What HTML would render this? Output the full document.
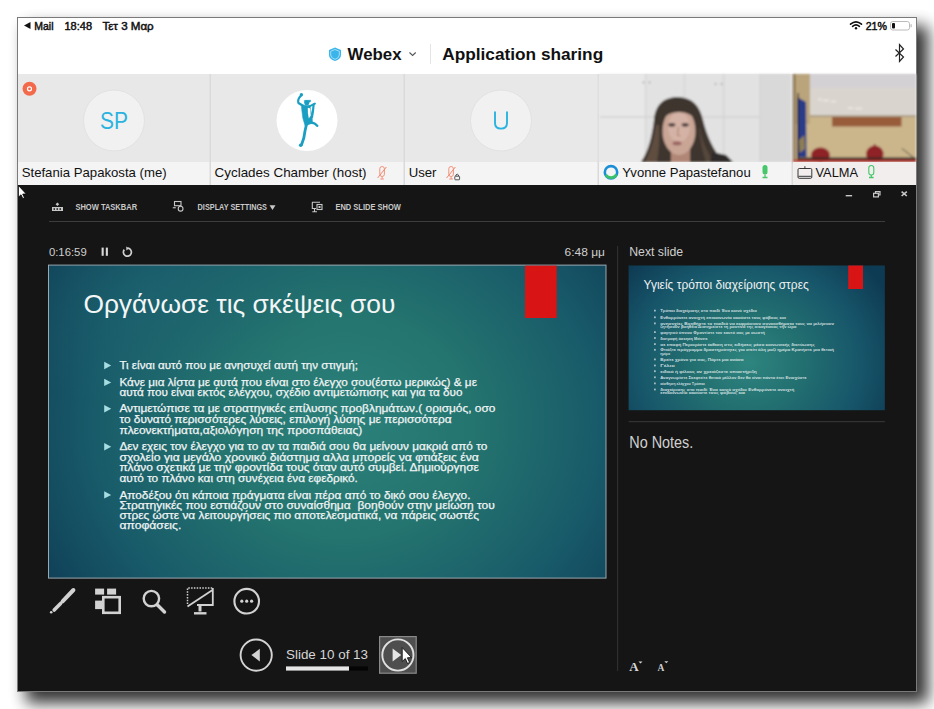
<!DOCTYPE html><html><head><meta charset="utf-8"><style>html,body{margin:0;padding:0;background:#fff}body{width:934px;height:709px;overflow:hidden}svg{display:block}text{font-family:"Liberation Sans",sans-serif;white-space:pre}</style></head><body>
<svg width="934" height="709" viewBox="0 0 934 709">
<defs>
<filter id="vb" x="-5%" y="-5%" width="110%" height="110%"><feGaussianBlur stdDeviation="0.9"/></filter>
<filter id="sh" x="-10%" y="-10%" width="120%" height="120%"><feGaussianBlur stdDeviation="8"/></filter>
<radialGradient id="sg1" gradientUnits="userSpaceOnUse" cx="0" cy="0" r="1" gradientTransform="translate(345 425) scale(365 320)">
  <stop offset="0" stop-color="#2c817b"/>
  <stop offset="0.35" stop-color="#24746f"/>
  <stop offset="0.7" stop-color="#185a69"/>
  <stop offset="1" stop-color="#0e3b54"/>
</radialGradient>
<radialGradient id="sg2" gradientUnits="userSpaceOnUse" cx="0" cy="0" r="1" gradientTransform="translate(150 300) scale(170 110)">
  <stop offset="0" stop-color="#1e6570" stop-opacity="0.55"/>
  <stop offset="1" stop-color="#1e6570" stop-opacity="0"/>
</radialGradient>
<radialGradient id="tg1" gradientUnits="userSpaceOnUse" cx="0" cy="0" r="1" gradientTransform="translate(748 362) scale(160 140)">
  <stop offset="0" stop-color="#2e857f"/>
  <stop offset="0.35" stop-color="#226f70"/>
  <stop offset="0.7" stop-color="#17566a"/>
  <stop offset="1" stop-color="#0e3b54"/>
</radialGradient>
</defs>
<rect width="934" height="709" fill="#fff"/>
<rect x="26" y="26" width="902" height="677" fill="#000" opacity="0.8" filter="url(#sh)"/>
<rect x="17" y="17" width="900" height="675" fill="#7a7a7a"/>
<rect x="18" y="18" width="898" height="673" fill="#fff"/>
<path d="M24 25.5 L30.5 22 L30.5 29 Z" fill="#111"/>
<text x="34.3" y="29.5" font-size="10.3" font-weight="normal" fill="#111" textLength="19.2" lengthAdjust="spacingAndGlyphs" stroke="#111" stroke-width="0.45">Mail</text>
<text x="64.5" y="29.5" font-size="10.3" font-weight="normal" fill="#111" textLength="27.5" lengthAdjust="spacingAndGlyphs" stroke="#111" stroke-width="0.45">18:48</text>
<text x="102.4" y="29.5" font-size="10.3" font-weight="normal" fill="#111" textLength="51.3" lengthAdjust="spacingAndGlyphs" stroke="#111" stroke-width="0.45">Τετ 3 Μαρ</text>
<text x="865.7" y="29.5" font-size="10.3" font-weight="normal" fill="#111" textLength="21.3" lengthAdjust="spacingAndGlyphs" stroke="#111" stroke-width="0.45">21%</text>
<g fill="none" stroke="#111" stroke-width="1.6" stroke-linecap="round"><path d="M850.5 24.2 Q856 19.5 861.5 24.2"/><path d="M852.6 26.3 Q856 23.4 859.4 26.3"/></g><circle cx="856" cy="28.3" r="1.2" fill="#111"/>
<rect x="890.5" y="21.5" width="19" height="8.5" rx="2.2" fill="none" stroke="#bbb" stroke-width="1"/><rect x="892" y="23" width="3" height="5.5" rx="1" fill="#111"/><rect x="910.5" y="24.2" width="1.2" height="3" fill="#bbb"/>
<path d="M335 47.5 L341 50 L341 55 Q341 59 335 61 Q329 59 329 55 L329 50 Z" fill="#3ab4ea"/><path d="M335 49.5 L339.3 51.3 L339.3 55 Q339.3 58 335 59.4 Q330.7 58 330.7 55 L330.7 51.3 Z" fill="none" stroke="#9fe0f5" stroke-width="1"/>
<text x="347.6" y="60" font-size="16.5" font-weight="bold" fill="#111" textLength="54" lengthAdjust="spacingAndGlyphs" >Webex</text>
<path d="M409.5 52.5 L412.6 55.5 L415.7 52.5" fill="none" stroke="#555" stroke-width="1.1"/>
<rect x="430" y="44" width="1" height="20" fill="#e4e4e4"/>
<text x="442.2" y="60.3" font-size="16.5" font-weight="bold" fill="#111" textLength="161" lengthAdjust="spacingAndGlyphs" >Application sharing</text>
<path d="M895.5 49.5 L903.5 57 L899.5 61.5 L899.5 44.5 L903.5 49 L895.5 56.5" fill="none" stroke="#222" stroke-width="1.2" stroke-linejoin="miter"/>
<rect x="18" y="74" width="898" height="88" fill="#e8e8e8"/>
<rect x="18" y="162" width="898" height="23" fill="#f4f4f4"/>
<rect x="209.5" y="74" width="1.5" height="111" fill="#dadada"/>
<rect x="403.5" y="74" width="1.5" height="111" fill="#dadada"/>
<rect x="597.5" y="74" width="1.5" height="111" fill="#dadada"/>
<rect x="791.5" y="74" width="1.5" height="111" fill="#dadada"/>
<circle cx="114" cy="120.5" r="30.5" fill="#f1f1f1" stroke="#e2e2e2" stroke-width="1"/>
<text x="100" y="128.8" font-size="23" font-weight="normal" fill="#2bb3e0" textLength="28" lengthAdjust="spacingAndGlyphs" >SP</text>
<circle cx="307" cy="120.5" r="30.5" fill="#ffffff"/>
<circle cx="501" cy="120.5" r="30.5" fill="#f1f1f1" stroke="#e2e2e2" stroke-width="1"/>
<path d="M495 111.5 V123 Q495 128.6 501 128.6 Q507 128.6 507 123 V111.5" fill="none" stroke="#2bb3e0" stroke-width="1.9"/>
<circle cx="29.5" cy="88.8" r="7" fill="#f26a4b"/><circle cx="29.5" cy="88.8" r="2" fill="none" stroke="#fff" stroke-width="1.2"/>
<text x="21.7" y="177" font-size="13" font-weight="normal" fill="#111" textLength="145" lengthAdjust="spacingAndGlyphs" >Stefania Papakosta (me)</text>
<text x="214.6" y="177" font-size="13" font-weight="normal" fill="#111" textLength="152" lengthAdjust="spacingAndGlyphs" >Cyclades Chamber (host)</text>
<text x="408.7" y="177" font-size="13" font-weight="normal" fill="#111" textLength="27.8" lengthAdjust="spacingAndGlyphs" >User</text>
<g fill="#1a9ec2" stroke="#1a9ec2" stroke-linecap="round" stroke-linejoin="round">
<circle cx="301.4" cy="94.7" r="1.7" stroke="none"/>
<path d="M301 95.5 Q297.2 99.5 298.4 103 L303.5 106" fill="none" stroke-width="2.2"/>
<circle cx="306.8" cy="102.8" r="2.5" stroke="none"/>
<path d="M304.6 100.4 L310.6 100.3 L310.2 102 L305 102.5 Z" stroke-width="0.6"/>
<path d="M301.6 105.2 L309.8 105.4 L311.2 112 L312.2 118 L312.4 123 L305.2 126 L302.8 118 L301.8 110 Z" stroke-width="0.6"/>
<path d="M309 106.6 L314.9 103.6" fill="none" stroke-width="2"/>
<path d="M313.6 104.6 L313 111 L312 117" fill="none" stroke-width="2.2"/>
<path d="M311 122.6 Q315 122.8 317.3 125.9" fill="none" stroke-width="2.3"/>
<path d="M306.8 123 L305 131 L303.8 138 L301.6 144.6" fill="none" stroke-width="2.8"/>
<circle cx="300.7" cy="145.2" r="1.8" stroke="none"/>
</g>
<path d="M307.8 107.8 L310.4 108.6 L310.7 115.8 L308.8 118.6 L307.9 113 Z" fill="#ffffff"/>
<g fill="none" stroke="#f2876c" stroke-width="0.9"><rect x="379.8" y="166.5" width="4.6" height="10" rx="2.3"/><path d="M382.1 176.5 V178.8 M380.3 179.0 H383.9"/><path d="M377.6 178.0 L386.4 167.0" stroke-width="1"/></g>
<g fill="none" stroke="#f2876c" stroke-width="0.9"><rect x="448.8" y="166.5" width="4.6" height="10" rx="2.3"/><path d="M451.1 176.5 V178.8 M449.3 179.0 H452.9"/><path d="M446.6 178.0 L455.4 167.0" stroke-width="1"/></g>
<g fill="none" stroke="#444" stroke-width="0.9"><rect x="454.8" y="176.2" width="4.8" height="3.6" rx="0.6"/><path d="M455.9 176.2 V175 Q457.2 173.2 458.5 175 V176.2"/></g>
<g filter="url(#vb)">
<rect x="599" y="74" width="192" height="88" fill="#e2e2e2"/>
<rect x="599" y="74" width="46" height="88" fill="#e8e8e8"/>
<rect x="760" y="74" width="31" height="88" fill="#d9d9d9"/>
<g fill="#d2d2d2"><rect x="600" y="116.3" width="160" height="1.5"/><rect x="645" y="74" width="1" height="88"/><rect x="684" y="74" width="1" height="42"/><rect x="723" y="74" width="1.2" height="88"/><rect x="759.5" y="74" width="1.2" height="88"/></g>
<g fill="#a0a0a0"><circle cx="643.5" cy="82.5" r="0.9"/><circle cx="649.5" cy="82.5" r="0.9"/><circle cx="715.5" cy="84" r="0.9"/><circle cx="721.5" cy="84" r="0.9"/></g>
<path d="M677.5 97 C663 97 655 106 654 120 C652 136 649 150 641 162 L724 162 C713 150 707 136 703 120 C700 106 692 97 677.5 97 Z" fill="#3e342e"/>
<path d="M656 125 C654 140 650 152 645 162 L657 162 C659 150 660 138 659 125 Z" fill="#5e4d40"/>
<path d="M700 128 C702 142 708 152 714 162 L706 162 C702 152 700 140 699 128 Z" fill="#55463a"/>
<path d="M712 152 L726 155 L733 162 L710 162 Z" fill="#2d2a2a"/>
<rect x="671" y="148" width="19" height="14" fill="#b08676"/>
<ellipse cx="679" cy="131" rx="16.5" ry="24" fill="#c9a595"/>
<ellipse cx="679" cy="127" rx="11" ry="15" fill="#d4b2a5"/>
<path d="M661.5 121 C662 98 696 98 696.5 121 C690 109 668 109 661.5 121 Z" fill="#3e342e"/>
<g fill="#4e3c3a"><ellipse cx="671.8" cy="124.8" rx="3.6" ry="1.9"/><ellipse cx="685.2" cy="124.8" rx="3.6" ry="1.9"/></g>
<path d="M678.5 127 L677.5 135 L680.5 136" fill="none" stroke="#b08676" stroke-width="1.2"/>
<ellipse cx="677" cy="143.3" rx="4.5" ry="2" fill="#9a6462"/>
</g>
<g filter="url(#vb)">
<rect x="793" y="74" width="123" height="88" fill="#cbb58b"/>
<rect x="793" y="74" width="17" height="50" fill="#baa47b"/>
<rect x="793" y="74" width="2.5" height="88" fill="#8c7552"/>
<rect x="810" y="74" width="106" height="42" fill="#d9d4cd"/>
<rect x="810" y="74" width="106" height="14" fill="#d4d1d4"/>
<g fill="#ebe8e3" opacity="0.9"><rect x="818" y="98.5" width="4" height="2"/><rect x="823" y="99.5" width="6" height="2"/><rect x="831" y="100.5" width="5" height="2"/><rect x="848" y="107" width="5" height="2"/><rect x="855" y="107.5" width="7" height="2"/></g>
<rect x="810" y="115.5" width="106" height="1" fill="#8a7e6c"/>
<rect x="832" y="117" width="69.5" height="9.5" fill="#985b3b"/>
<path d="M797 97 L806 102 L806.5 157 L797 157 Z" fill="#2a3b88"/><path d="M799 140 L804.5 135 L805 149 L799.5 153 Z" fill="#a89048" opacity="0.8"/><rect x="797.6" y="93" width="1.2" height="66" fill="#2e2a22"/>
<ellipse cx="820.5" cy="155" rx="9.5" ry="7.5" fill="#8f2428"/><ellipse cx="874.8" cy="154" rx="8.8" ry="8.3" fill="#8f2428"/><circle cx="874.8" cy="145.5" r="1.2" fill="#8f2428"/>
<rect x="797" y="157.5" width="119" height="2.3" fill="#2d2624"/><rect x="793" y="159.8" width="123" height="2.2" fill="#b4322a"/>
<path d="M902 148.5 L914 158" stroke="#2e2e2e" stroke-width="0.9"/>
</g>
<rect x="599" y="162" width="192" height="23" fill="#f4f4f4"/>
<rect x="793" y="162" width="123" height="23" fill="#f1eeed"/>
<text x="622.3" y="177" font-size="13" font-weight="normal" fill="#111" textLength="128.4" lengthAdjust="spacingAndGlyphs" >Yvonne Papastefanou</text>
<text x="815.5" y="177" font-size="13" font-weight="normal" fill="#111" textLength="42.5" lengthAdjust="spacingAndGlyphs" >VALMA</text>
<circle cx="611" cy="172.3" r="6.2" fill="none" stroke="#1a8fd8" stroke-width="2.6"/><path d="M606 175 A6.2 6.2 0 0 0 616.5 174.5" fill="none" stroke="#3cc06a" stroke-width="2.6"/>
<rect x="762.5" y="165" width="5" height="9.5" rx="2.5" fill="#45c76a"/><path d="M765 174.5 V177.5 M762.5 177.5 H767.5" stroke="#45c76a" stroke-width="1.3"/>
<rect x="868.8" y="165.5" width="5" height="9.5" rx="2.5" fill="none" stroke="#45c76a" stroke-width="1.1"/><path d="M871.3 175 V177.5 M869 177.5 H873.6" stroke="#45c76a" stroke-width="1.3"/>
<g fill="none" stroke="#222" stroke-width="0.9"><rect x="798" y="168.5" width="13.8" height="9.8" rx="1.2"/><path d="M798.5 176.3 H811.3"/><path d="M804.9 166.2 V168.5"/></g>
<rect x="18" y="185" width="898" height="506" fill="#151515"/>
<g fill="#c8c8c8"><path d="M57.4 202.4 L59.2 204.2 L57.4 206 L55.6 204.2 Z"/><rect x="52" y="207" width="11" height="4"/></g><g fill="#151515"><rect x="53.5" y="208.3" width="1.5" height="1.5"/><rect x="56.5" y="208.3" width="1.5" height="1.5"/><rect x="59.5" y="208.3" width="1.5" height="1.5"/></g>
<text x="75.4" y="210" font-size="9" font-weight="bold" fill="#c8c8c8" textLength="61.7" lengthAdjust="spacingAndGlyphs" >SHOW TASKBAR</text>
<g fill="none" stroke="#c8c8c8" stroke-width="1.1"><rect x="174.5" y="201.5" width="6.5" height="4.2"/><circle cx="180.6" cy="208.7" r="2.4"/></g><rect x="172.8" y="207.2" width="3" height="1.1" fill="#c8c8c8"/>
<text x="197.6" y="210" font-size="9" font-weight="bold" fill="#c8c8c8" textLength="69.4" lengthAdjust="spacingAndGlyphs" >DISPLAY SETTINGS</text>
<path d="M269.5 205.2 L275.5 205.2 L272.5 210 Z" fill="#c8c8c8"/>
<g fill="none" stroke="#c8c8c8" stroke-width="1.1"><path d="M312 202.2 H320 M312.3 202.2 V208.5 H316 M314.5 208.5 V211.5 M312.3 211.8 H317"/><rect x="317" y="204.5" width="5" height="5"/></g><rect x="318.5" y="206" width="2" height="2" fill="#c8c8c8"/>
<text x="335.4" y="210" font-size="9" font-weight="bold" fill="#c8c8c8" textLength="65.4" lengthAdjust="spacingAndGlyphs" >END SLIDE SHOW</text>
<g fill="#c8c8c8"><rect x="845.7" y="195" width="6.4" height="1.4"/></g><g fill="none" stroke="#c8c8c8" stroke-width="1.2"><rect x="873.6" y="193.3" width="4.8" height="3.6"/><path d="M875.5 193.3 V191.6 H880 V195 H878.4"/></g><path d="M901.6 191.6 L906.8 196 M906.8 191.6 L901.6 196" stroke="#c8c8c8" stroke-width="1.6"/>
<rect x="49" y="221" width="836" height="1" fill="#3c3c3c"/>
<text x="48.9" y="255.8" font-size="11.5" font-weight="normal" fill="#cfcfcf" textLength="37.8" lengthAdjust="spacingAndGlyphs" >0:16:59</text>
<g fill="#d8d8d8"><rect x="101.6" y="247.6" width="2.1" height="8.2"/><rect x="105.8" y="247.6" width="2.1" height="8.2"/></g>
<path d="M124.3 249.6 A4 4 0 1 0 128 248.2" fill="none" stroke="#d0d0d0" stroke-width="1.7"/><path d="M126.2 246.4 L129.2 248.3 L126.4 250.4 Z" fill="#d0d0d0"/>
<text x="564.6" y="255.8" font-size="11.5" font-weight="normal" fill="#cfcfcf" textLength="40.4" lengthAdjust="spacingAndGlyphs" >6:48 μμ</text>
<text x="629.2" y="255.8" font-size="12" font-weight="normal" fill="#cfcfcf" textLength="53.9" lengthAdjust="spacingAndGlyphs" >Next slide</text>
<rect x="617" y="246" width="1.2" height="425" fill="#2e2e2e"/>
<rect x="48" y="264.6" width="558.5" height="314" fill="#9aa8b0"/>
<rect x="49" y="265.6" width="556.5" height="312" fill="url(#sg1)"/><rect x="49" y="265.6" width="556.5" height="312" fill="url(#sg2)"/>
<rect x="525" y="265.6" width="31.7" height="52.4" fill="#d81414"/>
<text x="83.4" y="312.8" font-size="26.5" font-weight="normal" fill="#f4f6f6" textLength="312" lengthAdjust="spacingAndGlyphs" >Οργάνωσε τις σκέψεις σου</text>
<text x="119.4" y="369.1" font-size="11" font-weight="normal" fill="#f0f4f4" textLength="238.5" lengthAdjust="spacingAndGlyphs" stroke="#f0f4f4" stroke-width="0.25">Τι είναι αυτό που με ανησυχεί αυτή την στιγμή;</text>
<path d="M104.2 361.8 L111.2 365.5 L104.2 369.20000000000005 Z" fill="#a6dde3"/>
<text x="119.4" y="386.0" font-size="11" font-weight="normal" fill="#f0f4f4" textLength="357.5" lengthAdjust="spacingAndGlyphs" stroke="#f0f4f4" stroke-width="0.25">Κάνε μια λίστα με αυτά που είναι στο έλεγχο σου(έστω μερικώς) &amp; με</text>
<path d="M104.2 378.7 L111.2 382.4 L104.2 386.1 Z" fill="#a6dde3"/>
<text x="119.4" y="396.4" font-size="11" font-weight="normal" fill="#f0f4f4" textLength="343.0" lengthAdjust="spacingAndGlyphs" stroke="#f0f4f4" stroke-width="0.25">αυτά που είναι εκτός ελέγχου, σχέδιο αντιμετώπισης και για τα δυο</text>
<text x="119.4" y="412.3" font-size="11" font-weight="normal" fill="#f0f4f4" textLength="376.0" lengthAdjust="spacingAndGlyphs" stroke="#f0f4f4" stroke-width="0.25">Αντιμετώπισε τα με στρατηγικές επίλυσης προβλημάτων.( ορισμός, οσο</text>
<path d="M104.2 405.0 L111.2 408.7 L104.2 412.40000000000003 Z" fill="#a6dde3"/>
<text x="119.4" y="423.4" font-size="11" font-weight="normal" fill="#f0f4f4" textLength="332.3" lengthAdjust="spacingAndGlyphs" stroke="#f0f4f4" stroke-width="0.25">το δυνατό περισσότερες λύσεις, επιλογή λύσης με περισσότερα</text>
<text x="119.4" y="434.1" font-size="11" font-weight="normal" fill="#f0f4f4" textLength="242.8" lengthAdjust="spacingAndGlyphs" stroke="#f0f4f4" stroke-width="0.25">πλεονεκτήματα,αξιολόγηση της προσπάθειας)</text>
<text x="119.4" y="450.3" font-size="11" font-weight="normal" fill="#f0f4f4" textLength="367.9" lengthAdjust="spacingAndGlyphs" stroke="#f0f4f4" stroke-width="0.25">Δεν εχεις τον έλεγχο για το αν τα παιδιά σου θα μείνουν μακριά από το</text>
<path d="M104.2 443.0 L111.2 446.7 L104.2 450.40000000000003 Z" fill="#a6dde3"/>
<text x="119.4" y="460.6" font-size="11" font-weight="normal" fill="#f0f4f4" textLength="359.5" lengthAdjust="spacingAndGlyphs" stroke="#f0f4f4" stroke-width="0.25">σχολείο για μεγάλο χρονικό διάστημα αλλα μπορείς να φτιάξεις ένα</text>
<text x="119.4" y="470.8" font-size="11" font-weight="normal" fill="#f0f4f4" textLength="359.5" lengthAdjust="spacingAndGlyphs" stroke="#f0f4f4" stroke-width="0.25">πλάνο σχετικά με την φροντίδα τους όταν αυτό συμβεί. Δημιούργησε</text>
<text x="119.4" y="481.5" font-size="11" font-weight="normal" fill="#f0f4f4" textLength="238.5" lengthAdjust="spacingAndGlyphs" stroke="#f0f4f4" stroke-width="0.25">αυτό το πλάνο και στη συνέχεια ένα εφεδρικό.</text>
<text x="119.4" y="498.5" font-size="11" font-weight="normal" fill="#f0f4f4" textLength="351.1" lengthAdjust="spacingAndGlyphs" stroke="#f0f4f4" stroke-width="0.25">Αποδέξου ότι κάποια πράγματα είναι πέρα από το δικό σου έλεγχο.</text>
<path d="M104.2 491.2 L111.2 494.9 L104.2 498.6 Z" fill="#a6dde3"/>
<text x="119.4" y="508.5" font-size="11" font-weight="normal" fill="#f0f4f4" textLength="375.5" lengthAdjust="spacingAndGlyphs" stroke="#f0f4f4" stroke-width="0.25">Στρατηγικές που εστιάζουν στο συναίσθημα  βοηθούν στην μείωση του</text>
<text x="119.4" y="518.8" font-size="11" font-weight="normal" fill="#f0f4f4" textLength="359.5" lengthAdjust="spacingAndGlyphs" stroke="#f0f4f4" stroke-width="0.25">στρες ώστε να λειτουργήσεις πιο αποτελεσματικά, να πάρεις σωστές</text>
<text x="119.4" y="529.3" font-size="11" font-weight="normal" fill="#f0f4f4" textLength="61.9" lengthAdjust="spacingAndGlyphs" stroke="#f0f4f4" stroke-width="0.25">αποφάσεις.</text>
<rect x="628.6" y="265.5" width="256.2" height="144.7" fill="url(#tg1)"/>
<rect x="848.2" y="265.5" width="14.8" height="23.5" fill="#d81414"/>
<text x="643.5" y="289" font-size="13" font-weight="normal" fill="#eef2f2" textLength="165.3" lengthAdjust="spacingAndGlyphs" >Υγιείς τρόποι διαχείρισης στρες</text>
<text x="660.2" y="312.2" font-size="4.4" font-weight="bold" fill="#eef4f4" fill-opacity="0.85" textLength="96.6" lengthAdjust="spacingAndGlyphs">Τρόποι διαχείρισης στο παιδί Ένα κοινό σχέδιο</text>
<rect x="654" y="309.7" width="1.8" height="1.8" fill="#d8e6e8" opacity="0.7"/>
<text x="660.2" y="318.9" font-size="4.4" font-weight="bold" fill="#eef4f4" fill-opacity="0.85" textLength="125.7" lengthAdjust="spacingAndGlyphs">Ενθαρρύνετε ανοιχτή επικοινωνία ακούστε τους φόβους και</text>
<rect x="654" y="316.4" width="1.8" height="1.8" fill="#d8e6e8" opacity="0.7"/>
<text x="660.2" y="325.0" font-size="4.4" font-weight="bold" fill="#eef4f4" fill-opacity="0.85" textLength="173.9" lengthAdjust="spacingAndGlyphs">ανησυχίες Βοηθήστε τα παιδιά να εκφράσουν συναισθήματα τους να μιλήσουν</text>
<rect x="654" y="322.5" width="1.8" height="1.8" fill="#d8e6e8" opacity="0.7"/>
<text x="660.2" y="328.0" font-size="4.4" font-weight="bold" fill="#eef4f4" fill-opacity="0.85" textLength="136.3" lengthAdjust="spacingAndGlyphs">ζητήσουν βοήθεια Διατηρείστε τη ρουτίνα της οικογένειας την ώρα</text>
<text x="660.2" y="333.7" font-size="4.4" font-weight="bold" fill="#eef4f4" fill-opacity="0.85" textLength="104.7" lengthAdjust="spacingAndGlyphs">φαγητού ύπνου Φροντίστε τον εαυτό σας με σωστή</text>
<rect x="654" y="331.2" width="1.8" height="1.8" fill="#d8e6e8" opacity="0.7"/>
<text x="660.2" y="339.6" font-size="4.4" font-weight="bold" fill="#eef4f4" fill-opacity="0.85" textLength="47.4" lengthAdjust="spacingAndGlyphs">διατροφή άσκηση Μείνετε</text>
<rect x="654" y="337.1" width="1.8" height="1.8" fill="#d8e6e8" opacity="0.7"/>
<text x="660.2" y="345.7" font-size="4.4" font-weight="bold" fill="#eef4f4" fill-opacity="0.85" textLength="154.6" lengthAdjust="spacingAndGlyphs">σε επαφή Περιορίστε έκθεση στις ειδήσεις μέσα κοινωνικής δικτύωσης</text>
<rect x="654" y="343.2" width="1.8" height="1.8" fill="#d8e6e8" opacity="0.7"/>
<text x="660.2" y="351.4" font-size="4.4" font-weight="bold" fill="#eef4f4" fill-opacity="0.85" textLength="173.9" lengthAdjust="spacingAndGlyphs">Φτιάξτε πρόγραμμα δραστηριότητες για σπίτι όλη μαζί ημέρα Κρατήστε μια θετική</text>
<rect x="654" y="348.9" width="1.8" height="1.8" fill="#d8e6e8" opacity="0.7"/>
<text x="660.2" y="354.9" font-size="4.4" font-weight="bold" fill="#eef4f4" fill-opacity="0.85" textLength="9.8" lengthAdjust="spacingAndGlyphs">ημέρα</text>
<text x="660.2" y="361.0" font-size="4.4" font-weight="bold" fill="#eef4f4" fill-opacity="0.85" textLength="83.4" lengthAdjust="spacingAndGlyphs">Βρείτε χρόνο για σας, Πάρτε μια ανάσα</text>
<rect x="654" y="358.5" width="1.8" height="1.8" fill="#d8e6e8" opacity="0.7"/>
<text x="660.2" y="367.1" font-size="4.4" font-weight="bold" fill="#eef4f4" fill-opacity="0.85" textLength="14.6" lengthAdjust="spacingAndGlyphs">Γέλιο</text>
<rect x="654" y="364.6" width="1.8" height="1.8" fill="#d8e6e8" opacity="0.7"/>
<text x="660.2" y="372.8" font-size="4.4" font-weight="bold" fill="#eef4f4" fill-opacity="0.85" textLength="96.6" lengthAdjust="spacingAndGlyphs">ειδικό ή φίλους αν χρειάζεστε υποστήριξη</text>
<rect x="654" y="370.3" width="1.8" height="1.8" fill="#d8e6e8" opacity="0.7"/>
<text x="660.2" y="378.9" font-size="4.4" font-weight="bold" fill="#eef4f4" fill-opacity="0.85" textLength="146.4" lengthAdjust="spacingAndGlyphs">Αναγνωρίστε Σκεφτείτε θετικά μέλλον δεν θα είναι πάντα έτσι Ενισχύστε</text>
<rect x="654" y="376.4" width="1.8" height="1.8" fill="#d8e6e8" opacity="0.7"/>
<text x="660.2" y="385.0" font-size="4.4" font-weight="bold" fill="#eef4f4" fill-opacity="0.85" textLength="44.7" lengthAdjust="spacingAndGlyphs">αίσθηση ελέγχου Τρόποι</text>
<rect x="654" y="382.5" width="1.8" height="1.8" fill="#d8e6e8" opacity="0.7"/>
<text x="660.2" y="391.1" font-size="4.4" font-weight="bold" fill="#eef4f4" fill-opacity="0.85" textLength="134.2" lengthAdjust="spacingAndGlyphs">διαχείρισης στο παιδί Ένα κοινό σχέδιο Ενθαρρύνετε ανοιχτή</text>
<rect x="654" y="388.6" width="1.8" height="1.8" fill="#d8e6e8" opacity="0.7"/>
<text x="660.2" y="394.2" font-size="4.4" font-weight="bold" fill="#eef4f4" fill-opacity="0.85" textLength="85.0" lengthAdjust="spacingAndGlyphs">επικοινωνία ακούστε τους φόβους και</text>
<rect x="628.6" y="421.2" width="256.2" height="1" fill="#3a3a3a"/>
<text x="629.3" y="448" font-size="16" font-weight="normal" fill="#d0d0d0" textLength="64" lengthAdjust="spacingAndGlyphs" >No Notes.</text>
<g stroke="#d2d2d2" stroke-linecap="round"><path d="M73.4 590 L62.6 601.4" stroke-width="4"/><path d="M60.6 603.5 L54.2 610" stroke-width="3.6"/></g><circle cx="51.2" cy="612.2" r="1.3" fill="#d2d2d2"/>
<g fill="#d2d2d2"><rect x="95.1" y="588.6" width="9" height="6"/><rect x="107.1" y="588.6" width="9" height="6"/><rect x="95.1" y="600.6" width="9" height="8.5"/></g><rect x="103.3" y="597.2" width="16.4" height="15.6" fill="#151515" stroke="#d2d2d2" stroke-width="2.6"/>
<circle cx="151.4" cy="598.6" r="7.7" fill="none" stroke="#d2d2d2" stroke-width="2.4"/><path d="M157.5 605 L164.5 612" stroke="#d2d2d2" stroke-width="3.4" stroke-linecap="round"/>
<g fill="none" stroke="#d2d2d2" stroke-width="1.5" stroke-dasharray="1.5 1.3"><path d="M187.5 604 V588 H212.5"/></g><path d="M212.8 588 V605 H197" fill="none" stroke="#d2d2d2" stroke-width="1.8"/><path d="M187.5 606.5 L212.5 590" stroke="#d2d2d2" stroke-width="1.8"/><path d="M200 605 V611.5" stroke="#d2d2d2" stroke-width="3"/><path d="M194 613.3 H206.5" stroke="#d2d2d2" stroke-width="2.4"/>
<circle cx="246.7" cy="601.2" r="12.3" fill="none" stroke="#d2d2d2" stroke-width="2.1"/><g fill="#d2d2d2"><circle cx="241.8" cy="601.2" r="1.6"/><circle cx="246.7" cy="601.2" r="1.6"/><circle cx="251.6" cy="601.2" r="1.6"/></g>
<circle cx="256.2" cy="655.1" r="15.6" fill="none" stroke="#d4d4d4" stroke-width="1.9"/><path d="M259.8 648.8 L251.4 655.1 L259.8 661.4 Z" fill="#d4d4d4"/>
<text x="286" y="659.3" font-size="13.5" font-weight="normal" fill="#d6d6d6" textLength="82" lengthAdjust="spacingAndGlyphs" >Slide 10 of 13</text>
<rect x="286" y="666.4" width="82" height="4.2" fill="#050505"/><rect x="286" y="666.4" width="63" height="4.2" fill="#e6e6e6"/>
<rect x="379.6" y="636.6" width="36.6" height="36.6" fill="#4e4e4e" stroke="#8a8a8a" stroke-width="1.2"/>
<circle cx="397.9" cy="655" r="15.6" fill="none" stroke="#e0e0e0" stroke-width="1.9"/><path d="M392.6 648.4 L401.2 655 L392.6 661.6 Z" fill="#e6e6e6"/>
<path d="M402.2 647.5 L402.2 661.5 L405.3 658.6 L407.5 663.5 L409.6 662.5 L407.4 657.8 L411.6 657.6 Z" fill="#fff" stroke="#111" stroke-width="0.9"/>
<text x="629.2" y="671.3" font-size="13" font-weight="bold" fill="#d8d8d8" font-family="Liberation Serif" style="font-family:'Liberation Serif'">A</text><path d="M638.5 661.5 L640.5 663.5 L642.5 661.5 Z" fill="#d8d8d8"/>
<text x="657.6" y="671.3" font-size="9.5" font-weight="bold" fill="#d0d0d0" style="font-family:'Liberation Serif'">A</text><path d="M664.3 661.2 L666.3 663.2 L668.3 661.2 Z" fill="#d0d0d0"/>
<path d="M18.4 185.4 L18.4 197.2 L21 194.8 L22.8 198.6 L24.5 197.8 L22.7 194.1 L26.3 194 Z" fill="#fff" stroke="#000" stroke-width="0.8"/>
</svg></body></html>
